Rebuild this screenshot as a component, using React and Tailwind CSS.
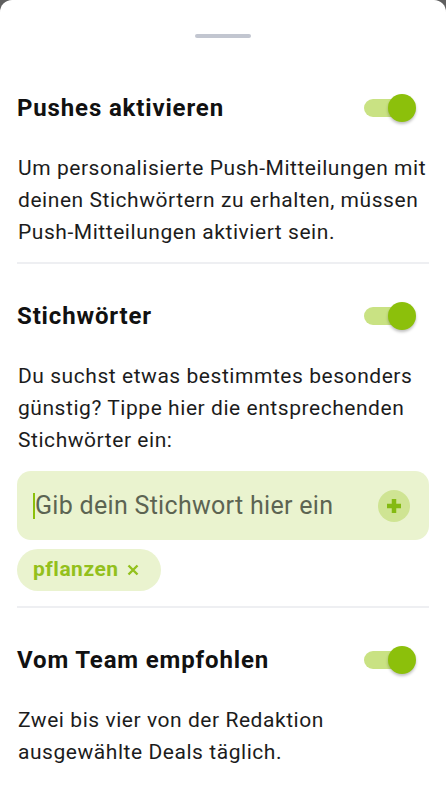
import React, { useState } from 'react';

function Toggle({ on, onChange }) {
  return (
    <button
      className="relative mr-[13px] h-[28px] w-[52px] shrink-0"
      onClick={() => onChange(!on)}>
      <span
        className={`absolute left-0 top-[5px] h-[18px] w-[46px] rounded-full ${on ? 'bg-[#c9e283]' : 'bg-[#d4d4d8]'}`}
      />
      <span
        className={`absolute top-0 h-[28px] w-[28px] rounded-full shadow-[0_2px_3px_rgba(0,0,0,0.25)] ${on ? 'left-[24px] bg-[#8cc00b]' : 'left-0 bg-[#f4f4f5]'}`}
      />
    </button>
  );
}

function Section({ title, on, onChange, children }) {
  return (
    <div>
      <div className="flex h-[28px] items-center justify-between">
        <p className="text-[24px] font-bold leading-[28px] tracking-[0.85px] text-[#111111]">{title}</p>
        <Toggle on={on} onChange={onChange} />
      </div>
      <div className="mt-[30px]">{children}</div>
    </div>
  );
}

function App() {
  const [pushes, setPushes] = useState(true);
  const [keywords, setKeywords] = useState(true);
  const [team, setTeam] = useState(true);
  const [tags, setTags] = useState(['pflanzen']);
  const [keyword, setKeyword] = useState('');

  const addTag = () => {
    if (!keyword.trim()) return;
    setTags([...tags, keyword.trim()]);
    setKeyword('');
  };

  return (
    <div className="min-h-[800px] bg-[#5f5f5f] font-['Roboto',sans-serif]">
      <div className="min-h-[800px] rounded-t-[12px] bg-white px-[17px] pt-[34px]">
        <div className="mx-auto h-[4px] w-[56px] rounded-full bg-[#c2c6d0]" />

        <div className="mt-[56px]">
          <Section title="Pushes aktivieren" on={pushes} onChange={setPushes}>
            <p className="pl-px text-[21px] leading-[32px] tracking-[0.55px] text-[#1c1c1c]">
              Um personalisierte Push-Mitteilungen mit deinen Stichwörtern zu erhalten, müssen
              Push-Mitteilungen aktiviert sein.
            </p>
          </Section>
        </div>

        <div className="mt-[14px] h-[2px] bg-[#eeeff2]" />

        <div className="mt-[38px]">
          <Section title="Stichwörter" on={keywords} onChange={setKeywords}>
            <p className="pl-px text-[21px] leading-[32px] tracking-[0.55px] text-[#1c1c1c]">
              Du suchst etwas bestimmtes besonders günstig? Tippe hier die entsprechenden
              Stichwörter ein:
            </p>
          </Section>
          <div className="mt-[15px] flex h-[69px] items-center rounded-[14px] bg-[#eaf3cf] pl-[16px] pr-[19px]">
            <span className="h-[26px] w-[2px] shrink-0 bg-[#8cc00b]" />
            <input
              type="text"
              value={keyword}
              onChange={(e) => setKeyword(e.target.value)}
              placeholder="Gib dein Stichwort hier ein"
              className="min-w-0 flex-1 bg-transparent text-[25px] tracking-[0.3px] text-[#2b2b2b] caret-[#8cc00b] placeholder:text-[#5c6452] focus:outline-none"
            />
            <button
              className="flex h-[32px] w-[32px] items-center justify-center rounded-full bg-[#cfe493]"
              onClick={addTag}>
              <svg width="18" height="18" viewBox="0 0 18 18">
                <path d="M9 2v14M2 9h14" stroke="#84ba12" strokeWidth="4.5" />
              </svg>
            </button>
          </div>
          <div className="mt-[9px] flex flex-wrap gap-2">
            {tags.map((t) => (
              <span
                key={t}
                className="flex h-[42px] items-center gap-[8px] rounded-full bg-[#eaf3cf] pl-[16px] pr-[22px] text-[21px] font-bold tracking-[0.5px] text-[#93c01c]">
                {t}
                <button onClick={() => setTags(tags.filter((x) => x !== t))}>
                  <svg width="12" height="12" viewBox="0 0 12 12" className="block">
                    <path d="M1.5 1.5l9 9M10.5 1.5l-9 9" stroke="#93c01c" strokeWidth="2.4" />
                  </svg>
                </button>
              </span>
            ))}
          </div>
        </div>

        <div className="mt-[15px] h-[2px] bg-[#eeeff2]" />

        <div className="mt-[38px]">
          <Section title="Vom Team empfohlen" on={team} onChange={setTeam}>
            <p className="pl-px text-[21px] leading-[32px] tracking-[0.55px] text-[#1c1c1c]">
              Zwei bis vier von der Redaktion ausgewählte Deals täglich.
            </p>
          </Section>
        </div>
      </div>
    </div>
  );
}

export default App;
